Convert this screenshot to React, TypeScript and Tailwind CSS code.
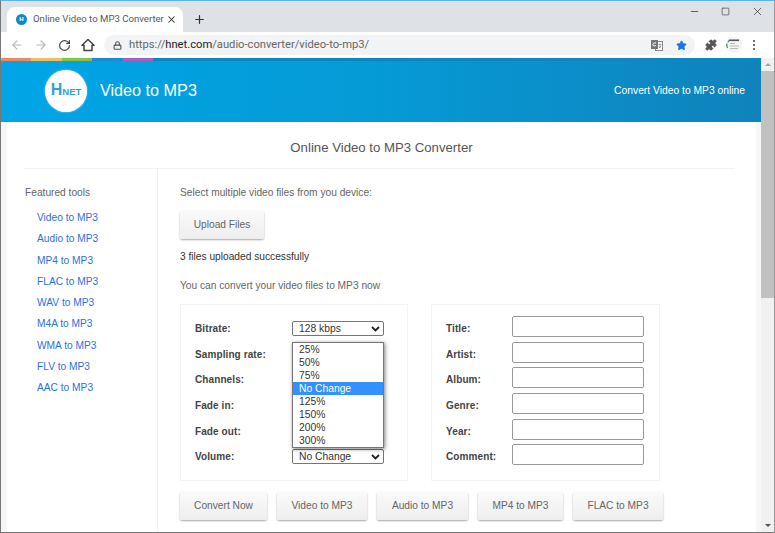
import { ArrowLeft, ArrowRight, Lock, Minus, Plus, RotateCw, Square, Star, X, Puzzle } from 'lucide-react';

const tools = ['Video to MP3', 'Audio to MP3', 'MP4 to MP3', 'FLAC to MP3', 'WAV to MP3', 'M4A to MP3', 'WMA to MP3', 'FLV to MP3', 'AAC to MP3'];
const fields = ['Title:', 'Artist:', 'Album:', 'Genre:', 'Year:', 'Comment:'];
const options = ['25%', '50%', '75%', 'No Change', '125%', '150%', '200%', '300%'];
const leftLabels = ['Bitrate:', 'Sampling rate:', 'Channels:', 'Fade in:', 'Fade out:', 'Volume:'];

const Chevron = () => (
  <svg width="9" height="6" viewBox="0 0 9 6" className="shrink-0">
    <path d="M1 1l3.5 3.5L8 1" fill="none" stroke="#222" strokeWidth="1.8" />
  </svg>
);

const FakeSelect = ({ value }: { value: string }) => (
  <div className="flex h-[15px] w-[92px] items-center justify-between rounded-[2px] border border-[#767676] bg-white pl-[6px] pr-[3px] text-[10.3px] leading-none text-[#333]">
    <span>{value}</span>
    <Chevron />
  </div>
);

const Btn = ({ label, width }: { label: string; width: string }) => (
  <div className={`flex h-[28px] items-center justify-center rounded-[2px] bg-gradient-to-b from-[#fafafa] to-[#eeeeee] text-[10.2px] text-[#666] shadow-[0_1px_2px_rgba(0,0,0,0.35)] ${width}`}>
    {label}
  </div>
);

const App = () => {
  return (
    <div className="relative flex h-[533px] w-[775px] flex-col overflow-hidden border-x border-b border-t border-b-[#777] border-l-[#777] border-r-[#999] border-t-[#5cb5ea] bg-white font-['Liberation_Sans',Arial,sans-serif]">
      {/* tab strip */}
      <div className="flex h-[31px] shrink-0 items-end bg-[#dee1e6] pl-[6px]">
        <div className="flex h-[25px] w-[176px] items-center rounded-t-[8px] bg-white pl-[9px] pr-[6px]">
          <span className="flex h-[11px] w-[11px] shrink-0 items-center justify-center rounded-full bg-[#1089c4] text-[6px] font-bold text-white">H</span>
          <span className="ml-[6px] flex-1 whitespace-nowrap font-['Roboto',sans-serif] text-[9.6px] text-[#55585c]">Online Video to MP3 Converter</span>
          <X size={11} strokeWidth={2.2} className="shrink-0 text-[#333]" />
        </div>
        <div className="mb-[6px] ml-[9px] flex h-[14px] w-[14px] items-center justify-center">
          <Plus size={13} strokeWidth={2.2} className="text-[#333]" />
        </div>
        <div className="mb-[14px] ml-auto flex items-center gap-[21px] pr-[10px]">
          <Minus size={11} strokeWidth={1.5} className="text-[#222]" />
          <Square size={9} strokeWidth={1.6} className="text-[#333]" />
          <X size={13} strokeWidth={1.2} className="text-[#222]" />
        </div>
      </div>

      {/* toolbar */}
      <div className="flex h-[26px] shrink-0 items-center bg-white pl-[9px] pr-[9px]">
        <ArrowLeft size={14} strokeWidth={2} className="text-[#b6b8bb]" />
        <ArrowRight size={14} strokeWidth={2} className="ml-[10px] text-[#b6b8bb]" />
        <RotateCw size={13} strokeWidth={2.2} className="ml-[10px] text-[#444]" />
        <svg width="14" height="14" viewBox="0 0 14 14" className="ml-[10px]">
          <path d="M1 7.2L7 1.5l6 5.7h-2V12.5H3V7.2z" fill="none" stroke="#444" strokeWidth="1.5" strokeLinejoin="round" />
        </svg>
        <div className="ml-[9px] flex h-[20px] w-[591px] items-center rounded-full bg-[#f1f3f4] pl-[9px] pr-[8px]">
          <Lock size={9} strokeWidth={3} className="text-[#555]" />
          <span className="ml-[7px] flex-1 whitespace-nowrap font-['Roboto',sans-serif] text-[11.2px] text-[#666]">
            https://<span className="text-[#222]">hnet.com</span>/audio-converter/video-to-mp3/
          </span>
          <svg width="12" height="11" viewBox="0 0 12 11" className="mr-[13px]">
            <rect x="4.5" y="1.5" width="7" height="9" fill="#fff" stroke="#888" />
            <rect x="0" y="0" width="7" height="9" fill="#777" />
            <path d="M5 3H3.2a1.5 1.5 0 1 0 1.6 2" fill="none" stroke="#fff" strokeWidth="1" />
            <path d="M7.5 4.5h3M9 4v4M8 8l2-2" fill="none" stroke="#777" strokeWidth="0.7" />
          </svg>
          <Star size={11} className="fill-[#1a73e8] text-[#1a73e8]" />
        </div>
        <Puzzle size={12} className="ml-[10px] fill-[#555] text-[#555]" />
        <svg width="16" height="16" viewBox="0 0 16 16" className="ml-[9px]">
          <circle cx="8" cy="8" r="8" fill="#f4f4f4" />
          <path d="M3 2.5h10v1.6H3z" fill="#555" />
          <path d="M1 6.5A7 7 0 0 0 1.5 11" fill="none" stroke="#2a9d4a" strokeWidth="1.2" />
          <path d="M2 5.2A7 7 0 0 1 3 3.5" fill="none" stroke="#2a6fd8" strokeWidth="1.2" />
          <path d="M4 6.5h5M4 9h9M4 11.5h8" stroke="#aaa" strokeWidth="0.8" />
        </svg>
        <div className="ml-[11px] flex flex-col gap-[2px]">
          <span className="h-[2px] w-[2px] rounded-full bg-[#444]" />
          <span className="h-[2px] w-[2px] rounded-full bg-[#444]" />
          <span className="h-[2px] w-[2px] rounded-full bg-[#444]" />
        </div>
      </div>

      {/* page + scrollbar */}
      <div className="flex min-h-0 flex-1">
        <div className="flex min-w-0 flex-1 flex-col">
          <div className="flex h-[3px] shrink-0">
            <div className="h-full w-[30px] bg-[#ee8a5e]" />
            <div className="h-full w-[31px] bg-[#f2bd5c]" />
            <div className="h-full w-[30px] bg-[#84c341]" />
            <div className="h-full w-[31px] bg-[#1e88d8]" />
            <div className="h-full w-[30px] bg-[#a45fc0]" />
            <div className="h-full flex-1 bg-[#0c87c4]" />
          </div>
          <div className="flex h-[61px] shrink-0 items-center bg-gradient-to-r from-[#00a5e6] via-[#059ad6] to-[#0f82bb] pb-[2px] pl-[44px] pr-[16px] text-white">
            <div className="flex h-[42px] w-[42px] items-baseline justify-center rounded-full bg-white pt-[12px] text-[#2ba3dc] shadow-[0_0_2px_rgba(255,255,255,0.7)]">
              <span className="text-[16px] font-bold leading-none">H</span>
              <span className="text-[9.5px] font-bold leading-none">NET</span>
            </div>
            <span className="ml-[13px] text-[16.2px]">Video to MP3</span>
            <span className="ml-auto text-[10.3px]">Convert Video to MP3 online</span>
          </div>

          <div className="min-h-0 flex-1 border-l-[6px] border-r-[5px] border-l-[#f6f6f6] border-r-[#f7f7f7]">
            <div className="ml-[17px] mr-[21px] flex h-[47px] items-center justify-center border-b border-b-[#f2f2f2] pl-[4px] pt-[6px] text-[13.2px] text-[#555]">
              Online Video to MP3 Converter
            </div>
            <div className="flex">
              <div className="h-[400px] w-[151px] shrink-0 border-r border-r-[#f0f0f0] pl-[18px] pt-[17px]">
                <div className="text-[10.2px] leading-[14px] text-[#666]">Featured tools</div>
                <div className="ml-[12px] mt-[7px] flex flex-col">
                  {tools.map((t) => (
                    <div key={t} className="h-[21.3px] text-[10.2px] leading-[21.3px] text-[#2f6fe0]">{t}</div>
                  ))}
                </div>
              </div>
              <div className="pl-[22px] pt-[17px] text-[10.2px] text-[#666]">
                <div className="leading-[14px]">Select multiple video files from you device:</div>
                <div className="mt-[11px]"><Btn label="Upload Files" width="w-[84px]" /></div>
                <div className="mt-[11px] leading-[14px] text-[#333]">3 files uploaded successfully</div>
                <div className="mt-[15px] leading-[14px]">You can convert your video files to MP3 now</div>

                <div className="mt-[11px] flex gap-[23px]">
                  <div className="flex h-[177px] w-[228px] flex-col border border-[#f3f3f3] pl-[14px] pt-[11px]">
                    {leftLabels.map((l, i) => (
                      <div key={l} className="flex h-[25.6px] items-center">
                        <span className="w-[97px] text-[10px] font-bold tracking-[0.1px] text-[#444]">{l}</span>
                        {i === 0 && <FakeSelect value="128 kbps" />}
                        {i === 5 && <FakeSelect value="No Change" />}
                      </div>
                    ))}
                  </div>
                  <div className="flex h-[177px] w-[229px] flex-col border border-[#f3f3f3] pl-[14px] pt-[11px]">
                    {fields.map((f) => (
                      <div key={f} className="flex h-[25.6px] items-center">
                        <span className="w-[66px] text-[10px] font-bold tracking-[0.1px] text-[#444]">{f}</span>
                        <div className="mb-[4px] h-[21px] w-[132px] rounded-[2px] border border-[#999] bg-white" />
                      </div>
                    ))}
                  </div>
                </div>

                <div className="mt-[11px] flex gap-[10px]">
                  <Btn label="Convert Now" width="w-[87px]" />
                  <Btn label="Video to MP3" width="w-[90px]" />
                  <Btn label="Audio to MP3" width="w-[91px]" />
                  <Btn label="MP4 to MP3" width="w-[85px]" />
                  <Btn label="FLAC to MP3" width="w-[90px]" />
                </div>
              </div>
            </div>
          </div>
        </div>

        {/* scrollbar */}
        <div className="flex w-[13px] shrink-0 flex-col items-center bg-[#f1f1f1] pt-[5px]">
          <div className="h-0 w-0 border-x-[3px] border-b-[3px] border-x-transparent border-b-[#a3a3a3]" />
          <div className="mt-[5px] h-[227px] w-full bg-[#c1c1c1]" />
          <div className="mb-[5px] mt-auto h-0 w-0 border-x-[3px] border-t-[3px] border-x-transparent border-t-[#505050]" />
        </div>
      </div>

      {/* open dropdown */}
      <div className="absolute left-[291px] top-[341px] flex w-[92px] flex-col border border-[#767676] bg-white text-[10.3px] leading-[13px] text-[#333] shadow-[1px_1px_4px_rgba(0,0,0,0.5)]">
        {options.map((o) => (
          <div key={o} className={o === 'No Change' ? 'bg-[#3390ff] pl-[6px] text-white' : 'pl-[6px]'}>{o}</div>
        ))}
      </div>
    </div>
  );
};

export default App;
